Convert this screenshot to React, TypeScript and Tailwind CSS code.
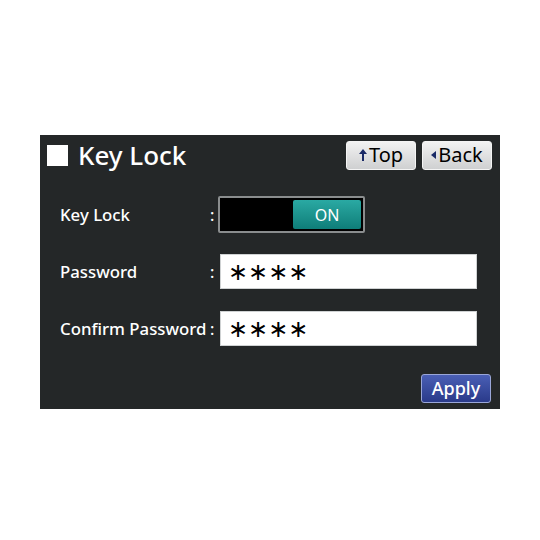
export default function App() {
  return (
    <div className="flex h-[540px] w-[540px] items-start justify-center bg-white pt-[135px] font-['Noto_Sans',sans-serif]">
      <div className="flex h-[274px] w-[460px] flex-col bg-[#242728] pl-[7px] pr-[8px] pt-[2px]">
        {/* header */}
        <div className="flex h-[36px] items-center">
          <div className="h-[21px] w-[21px] bg-white" />
          <span className="ml-[10px] text-[26px] leading-none font-medium text-white">Key Lock</span>
          <div className="ml-auto flex gap-[6px]">
            <HeadButton label="Top" arrow="up" />
            <HeadButton label="Back" arrow="left" />
          </div>
        </div>

        {/* rows */}
        <div className="mt-[23px] flex flex-col pl-[13px]">
          <div className="flex h-[37px] items-center">
            <Label>Key Lock</Label>
            <Colon />
            <div className="ml-[3px] flex h-[37px] w-[147px] rounded-[2px] border-2 border-[#8a8d8e] bg-black p-[2px]">
              <div className="flex-1" />
              <div className="flex w-[68px] items-center justify-center rounded-[2px] bg-gradient-to-b from-[#2aa9a3] to-[#0e7e79] text-[16px] text-white">
                ON
              </div>
            </div>
          </div>

          <div className="mt-[21px] flex h-[35px] items-center">
            <Label>Password</Label>
            <Colon />
            <PasswordBox />
          </div>

          <div className="mt-[22px] flex h-[35px] items-center">
            <Label>Confirm Password</Label>
            <Colon />
            <PasswordBox />
          </div>
        </div>

        <div className="mt-[28px] flex justify-end pr-[1px]">
          <button className="flex h-[29px] w-[70px] items-center justify-center rounded-[3px] border border-[#9aa6d8] bg-gradient-to-b from-[#4a5fb5] to-[#2a3a8a] text-[18px] font-medium text-white">
            Apply
          </button>
        </div>
      </div>
    </div>
  )
}

function Label({ children }: { children: string }) {
  return <span className="w-[150px] text-[16.8px] font-medium text-white">{children}</span>
}

function Colon() {
  return <span className="w-[5px] text-[16px] font-medium text-white">:</span>
}

function PasswordBox() {
  return (
    <div className="ml-[5px] flex h-[35px] w-[257px] items-center border border-[#cfd2d3] bg-white pl-[7px]">
      <span className="font-['DejaVu_Sans',sans-serif] text-[24px] leading-none text-black">∗∗∗∗</span>
    </div>
  )
}

function HeadButton({ label, arrow }: { label: string; arrow: 'up' | 'left' }) {
  return (
    <button className="flex h-[29px] w-[70px] items-center justify-center gap-[2px] rounded-[3px] border border-[#f4f4f4] bg-gradient-to-b from-[#f2f2f2] to-[#cfd0d1] text-[20px] leading-none text-black">
      {arrow === 'up' ? (
        <svg width="8" height="12" viewBox="0 0 8 12">
          <path d="M4 0 L8 5 H5 V12 H3 V5 H0 Z" fill="#1a2a66" />
        </svg>
      ) : (
        <svg width="5" height="8" viewBox="0 0 5 8">
          <path d="M0 4 L5 0 V8 Z" fill="#1a2a66" />
        </svg>
      )}
      <span>{label}</span>
    </button>
  )
}
